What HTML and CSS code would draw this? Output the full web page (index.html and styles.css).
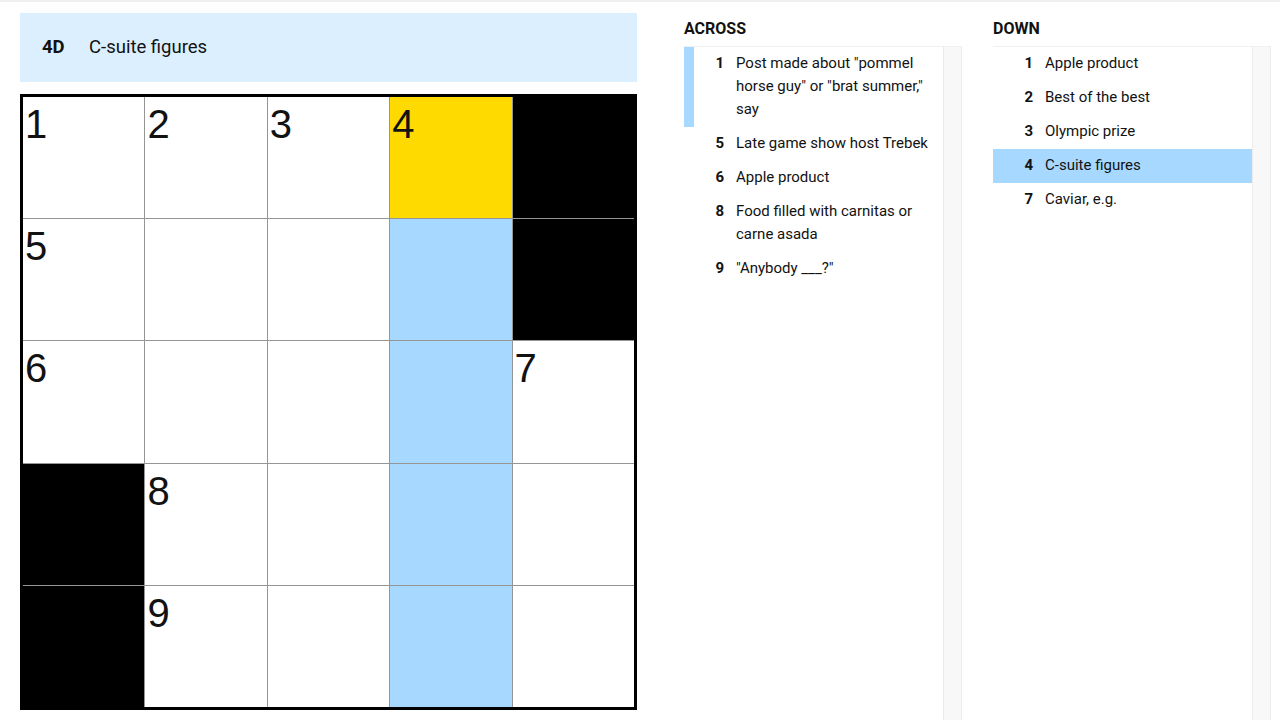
FILE: index.html
```html
<!DOCTYPE html>
<html lang="en">
<head>
  <meta charset="UTF-8">
  <title>Mini Crossword</title>
  <link rel="stylesheet" href="styles.css">
</head>
<body>

  <div class="page">

    <!-- left: clue bar + board -->
    <div class="board-col">
      <div class="clue-bar">
        <span class="clue-bar-num">4D</span>
        <span class="clue-bar-text">C-suite figures</span>
      </div>

      <div class="board">
        <div class="cell"><span class="num">1</span></div>
        <div class="cell"><span class="num">2</span></div>
        <div class="cell"><span class="num">3</span></div>
        <div class="cell selected"><span class="num">4</span></div>
        <div class="cell block"></div>

        <div class="cell"><span class="num">5</span></div>
        <div class="cell"></div>
        <div class="cell"></div>
        <div class="cell word"></div>
        <div class="cell block"></div>

        <div class="cell"><span class="num">6</span></div>
        <div class="cell"></div>
        <div class="cell"></div>
        <div class="cell word"></div>
        <div class="cell"><span class="num">7</span></div>

        <div class="cell block"></div>
        <div class="cell"><span class="num">8</span></div>
        <div class="cell"></div>
        <div class="cell word"></div>
        <div class="cell"></div>

        <div class="cell block"></div>
        <div class="cell"><span class="num">9</span></div>
        <div class="cell"></div>
        <div class="cell word"></div>
        <div class="cell"></div>
      </div>
    </div>

    <!-- across clues -->
    <div class="clue-col">
      <h3 class="clue-title">Across</h3>
      <div class="clue-box">
        <ol class="clue-list">
          <li class="clue cross"><span class="clue-num">1</span><span class="clue-text">Post made about "pommel horse guy" or "brat summer," say</span></li>
          <li class="clue"><span class="clue-num">5</span><span class="clue-text">Late game show host Trebek</span></li>
          <li class="clue"><span class="clue-num">6</span><span class="clue-text">Apple product</span></li>
          <li class="clue"><span class="clue-num">8</span><span class="clue-text">Food filled with carnitas or carne asada</span></li>
          <li class="clue"><span class="clue-num">9</span><span class="clue-text">"Anybody ___?"</span></li>
        </ol>
        <div class="scroll-track"></div>
      </div>
    </div>

    <!-- down clues -->
    <div class="clue-col">
      <h3 class="clue-title">Down</h3>
      <div class="clue-box">
        <ol class="clue-list">
          <li class="clue"><span class="clue-num">1</span><span class="clue-text">Apple product</span></li>
          <li class="clue"><span class="clue-num">2</span><span class="clue-text">Best of the best</span></li>
          <li class="clue"><span class="clue-num">3</span><span class="clue-text">Olympic prize</span></li>
          <li class="clue active"><span class="clue-num">4</span><span class="clue-text">C-suite figures</span></li>
          <li class="clue"><span class="clue-num">7</span><span class="clue-text">Caviar, e.g.</span></li>
        </ol>
        <div class="scroll-track"></div>
      </div>
    </div>

  </div>

</body>
</html>
```

FILE: styles.css
```css
html, body {
  height: 100%;
}

body {
  margin: 0;
  font-family: Roboto, "Liberation Sans", sans-serif;
  color: #121212;
  background: #fff;
  border-top: 2px solid #f0f0f0;
  box-sizing: border-box;
  overflow: hidden;
}

.page {
  display: flex;
  height: 100%;
  padding: 11px 10px 0 20px;
  box-sizing: border-box;
}

/* ---------- board ---------- */

.board-col {
  width: 617px;
  flex-shrink: 0;
  display: flex;
  flex-direction: column;
  gap: 12px;
}

.clue-bar {
  height: 69px;
  background: #dcefff;
  display: flex;
  align-items: center;
  padding: 0 0 2px 22px;
  box-sizing: border-box;
  font-size: 18.5px;
}

.clue-bar-num {
  font-weight: 700;
  width: 47px;
}

.board {
  width: 617px;
  height: 616px;
  box-sizing: border-box;
  border: 3px solid #000;
  background: #959595;
  display: grid;
  grid-template-columns: repeat(5, 1fr);
  grid-template-rows: repeat(5, 1fr);
  gap: 1px;
}

.cell {
  background: #fff;
  font-family: "Liberation Sans", Arial, sans-serif;
  font-size: 40px;
  line-height: normal;
  padding: 5px 0 0 2px;
}

.cell.block {
  background: #000;
}

.cell.selected {
  background: #ffda00;
}

.cell.word {
  background: #a7d8ff;
}

/* ---------- clue lists ---------- */

.clue-col {
  display: flex;
  flex-direction: column;
  margin-left: 47px;
  width: 278px;
  flex-shrink: 0;
}

.clue-col + .clue-col {
  margin-left: 31px;
}

.clue-title {
  margin: 0;
  height: 33px;
  font-size: 16px;
  font-weight: 700;
  text-transform: uppercase;
  line-height: 32px;
}

.clue-box {
  flex: 1;
  display: flex;
  border-top: 1px solid #f0f0f0;
}

.clue-list {
  flex: 1;
  list-style: none;
  margin: 0;
  padding: 0;
}

.clue {
  display: flex;
  font-size: 15px;
  line-height: 23px;
  padding: 5px 8px 6px 0;
  border-left: 10px solid transparent;
}

.clue.cross {
  border-left-color: #a7d8ff;
}

.clue.active {
  background: #a7d8ff;
}

.clue-num {
  width: 30px;
  flex-shrink: 0;
  text-align: right;
  font-weight: 700;
  margin-right: 12px;
}

.scroll-track {
  width: 17px;
  background: #f8f8f8;
  border-left: 1px solid #ebebeb;
  border-right: 1px solid #ebebeb;
}
```
